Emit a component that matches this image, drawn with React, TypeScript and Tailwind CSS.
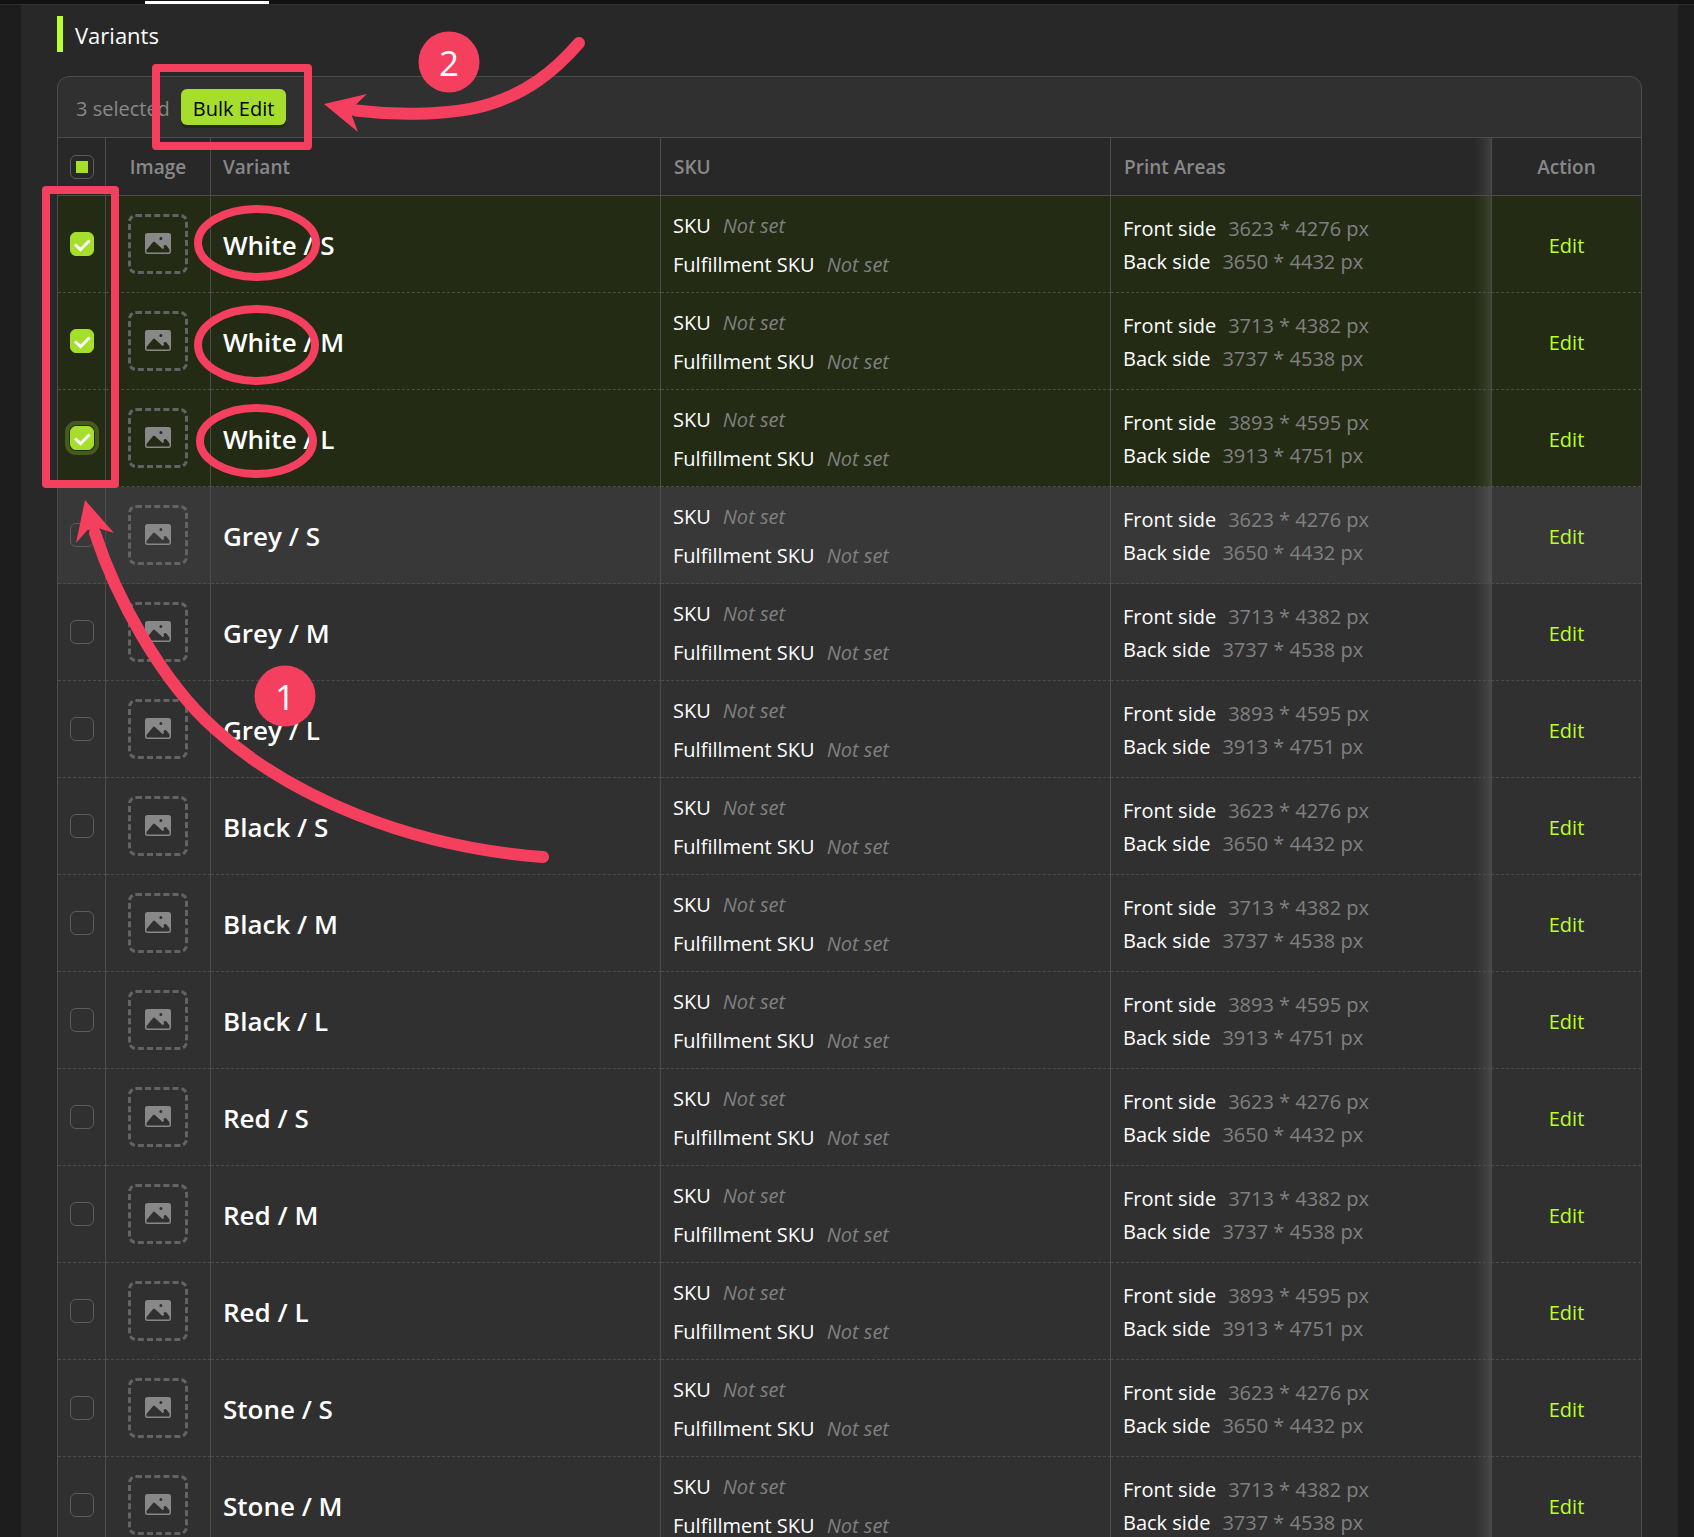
import { useState } from "react";

type Variant = { name: string; front: string; back: string };

const SIZES = [
  { size: "S", front: "3623 * 4276 px", back: "3650 * 4432 px" },
  { size: "M", front: "3713 * 4382 px", back: "3737 * 4538 px" },
  { size: "L", front: "3893 * 4595 px", back: "3913 * 4751 px" },
];

const VARIANTS: Variant[] = ["White", "Grey", "Black", "Red", "Stone"].flatMap((color) =>
  SIZES.map((s) => ({ name: `${color} / ${s.size}`, front: s.front, back: s.back })),
);

function ImageIcon() {
  return (
    <svg viewBox="0 0 26 22" className="h-[22px] w-[26px]" aria-hidden="true">
      <path
        fill="#888888"
        fillRule="evenodd"
        d="M2.500 0h21A2.500 2.500 0 0 1 26 2.500v16a2.500 2.500 0 0 1-2.500 2.500h-21A2.500 2.500 0 0 1 0 18.500v-16A2.500 2.500 0 0 1 2.500 0zM1.500 17v1.700q0 .8.800.800h21.400q.8 0 .8-.8v-2.200l-3-4c-.9-.9-2.200-.6-2.700.2-.5.900 0 1.600.4 2.300l-1.700 1L9.900 8.900q-.9-.8-1.800 0zM15.900 3.900a1.500 1.500 0 1 0 0 3 1.500 1.500 0 0 0 0-3z"
      />
    </svg>
  );
}

function Checkbox({
  label,
  checked,
  mixed = false,
  focused = false,
  onChange,
}: {
  label: string;
  checked: boolean;
  mixed?: boolean;
  focused?: boolean;
  onChange: () => void;
}) {
  return (
    <label className="mx-auto grid size-6 place-items-center">
      <input
        type="checkbox"
        aria-label={label}
        checked={checked}
        onChange={onChange}
        className={
          "col-start-1 row-start-1 size-6 appearance-none rounded-md border border-[#5c5c5c] checked:border-[#a5de2c] checked:bg-[#a5de2c] " +
          (focused ? "outline-4 outline-offset-1 outline-[#465a1c]" : "outline-none")
        }
      />
      {mixed && <span className="col-start-1 row-start-1 size-3 bg-[#a5de2c]" />}
      {checked && (
        <svg viewBox="0 0 24 24" className="pointer-events-none col-start-1 row-start-1 size-6" aria-hidden="true">
          <path d="M5 12.500l5.500 5.200L19.500 8.500" fill="none" stroke="#fff" strokeWidth="3" />
        </svg>
      )}
    </label>
  );
}

function Annotations() {
  return (
    <svg
      className="pointer-events-none absolute top-0 left-0 h-[900px] w-[640px]"
      viewBox="0 0 640 900"
      aria-hidden="true"
    >
      <g fill="none" stroke="#f53f5f" strokeWidth="8" strokeLinejoin="round">
        <rect x="156" y="68" width="152" height="78" />
        <rect x="46" y="190" width="69" height="294" />
        <ellipse cx="257" cy="243" rx="59" ry="34" />
        <ellipse cx="256.500" cy="345" rx="58.500" ry="36" />
        <ellipse cx="256.500" cy="441" rx="56.500" ry="33" />
      </g>
      <g fill="none" stroke="#f53f5f" strokeWidth="12" strokeLinecap="round">
        <path d="M356 110.500C400 116 455 115 490 104S552 74 579 43" />
        <path d="M95 533C115 595 160 680 215 729C290 797 410 847 543 857" />
      </g>
      <g fill="#f53f5f">
        <path d="M324 104l43-10-11 10.500-4 11.500 6 16z" />
        <path d="M85 500l-9 43 11.500-13 12-1.500 14.500 4.500z" />
        <circle cx="449" cy="62" r="30.500" />
        <circle cx="285" cy="696" r="30.500" />
      </g>
      <g fill="#fff" fontFamily="'Open Sans', sans-serif" fontSize="35" textAnchor="middle">
        <text x="449" y="76">2</text>
        <text x="285" y="710">1</text>
      </g>
    </svg>
  );
}

const headCell = "border-b border-[#4c4c4c] bg-[#282828] text-[19px] font-semibold text-[#888888]";
const bodyCell = "border-b border-b-[#4c4c4c] border-r-[#4c4c4c] [border-bottom-style:dashed]";
const fade = "bg-[linear-gradient(to_left,#ffffff1c,#ffffff0c_8px,#ffffff00_17px)]";

export default function App() {
  const [selected, setSelected] = useState<number[]>([0, 1, 2]);
  const toggle = (i: number) =>
    setSelected((s) => (s.includes(i) ? s.filter((n) => n !== i) : [...s, i]));
  const all = selected.length === VARIANTS.length;

  return (
    <div className="relative h-screen overflow-hidden bg-[#1d1d1d] font-['Open_Sans',sans-serif] text-[20px] leading-[33px] text-white">
      <header className="flex h-[5px] flex-col border-b border-[#303030] bg-[#121212]">
        <span className="mt-px ml-[145px] h-[3px] w-[124px] bg-white" />
      </header>

      <main className="mr-4 ml-[21px] bg-[#282828] pt-[11px] pr-9 pl-9">
        <h2 className="mb-6 flex h-9 items-center border-l-6 border-[#b9ff2c] pt-0.5 pl-3 text-[22px]">Variants</h2>

        <section className="overflow-hidden rounded-t-xl border border-[#4c4c4c] bg-[#303030]">
          <div className="flex h-[61px] items-center gap-[11px] border-b border-[#4c4c4c] pl-[18px]">
            <span className="pt-0.5 text-[#888888]">3 selected</span>
            <button
              type="button"
              className="h-9 rounded-md bg-[#a5de2c] px-3 pt-0.5 text-black shadow-[0_3px_0_#232b15]"
            >
              Bulk Edit
            </button>
          </div>

          <table className="w-full table-fixed border-separate border-spacing-0 text-left">
            <colgroup>
              <col className="w-[48px]" />
              <col className="w-[105px]" />
              <col className="w-[450px]" />
              <col className="w-[450px]" />
              <col />
              <col className="w-[150px]" />
            </colgroup>
            <thead>
              <tr className="h-[58px]">
                <th className={`${headCell} border-r`}>
                  <Checkbox
                    label="Select all variants"
                    checked={all}
                    mixed={!all && selected.length > 0}
                    onChange={() => setSelected(all ? [] : VARIANTS.map((_, i) => i))}
                  />
                </th>
                <th className={`${headCell} border-r pt-0.5 text-center`}>Image</th>
                <th className={`${headCell} border-r pt-0.5 pl-3`}>Variant</th>
                <th className={`${headCell} border-r pt-0.5 pl-[13px]`}>SKU</th>
                <th className={`${headCell} ${fade} pt-0.5 pl-[13px]`}>Print Areas</th>
                <th className={`${headCell} border-l pt-0.5 text-center`}>Action</th>
              </tr>
            </thead>
            <tbody>
              {VARIANTS.map((v, i) => (
                <tr
                  key={v.name}
                  className={
                    "h-[97px] " + (selected.includes(i) ? "bg-[#232b15]" : i === 3 ? "bg-[#383838]" : "bg-[#303030]")
                  }
                >
                  <td className={`${bodyCell} border-r`}>
                    <Checkbox
                      label={`Select ${v.name}`}
                      checked={selected.includes(i)}
                      focused={i === 2}
                      onChange={() => toggle(i)}
                    />
                  </td>
                  <td className={`${bodyCell} border-r`}>
                    <div className="mx-auto grid size-[60px] place-items-center rounded-lg border-3 border-dashed border-[#636363]">
                      <ImageIcon />
                    </div>
                  </td>
                  <td className={`${bodyCell} border-r pt-0.5 pl-3 text-[26px] font-semibold`}>{v.name}</td>
                  <td className={`${bodyCell} border-r pt-0.5 pl-3`}>
                    <div className="flex flex-col gap-1.5">
                      <p className="flex gap-3">
                        SKU <em className="text-[#808080]">Not set</em>
                      </p>
                      <p className="flex gap-3">
                        Fulfillment SKU <em className="text-[#808080]">Not set</em>
                      </p>
                    </div>
                  </td>
                  <td className={`${bodyCell} ${fade} pt-0.5 pl-3`}>
                    <p className="flex gap-3">
                      Front side <span className="text-[#808080]">{v.front}</span>
                    </p>
                    <p className="flex gap-3">
                      Back side <span className="text-[#808080]">{v.back}</span>
                    </p>
                  </td>
                  <td className={`${bodyCell} border-l border-l-[#4c4c4c] pt-0.5 text-center`}>
                    <button type="button" className="text-[#b9ff2c]">
                      Edit
                    </button>
                  </td>
                </tr>
              ))}
            </tbody>
          </table>
        </section>
      </main>

      <Annotations />
    </div>
  );
}
